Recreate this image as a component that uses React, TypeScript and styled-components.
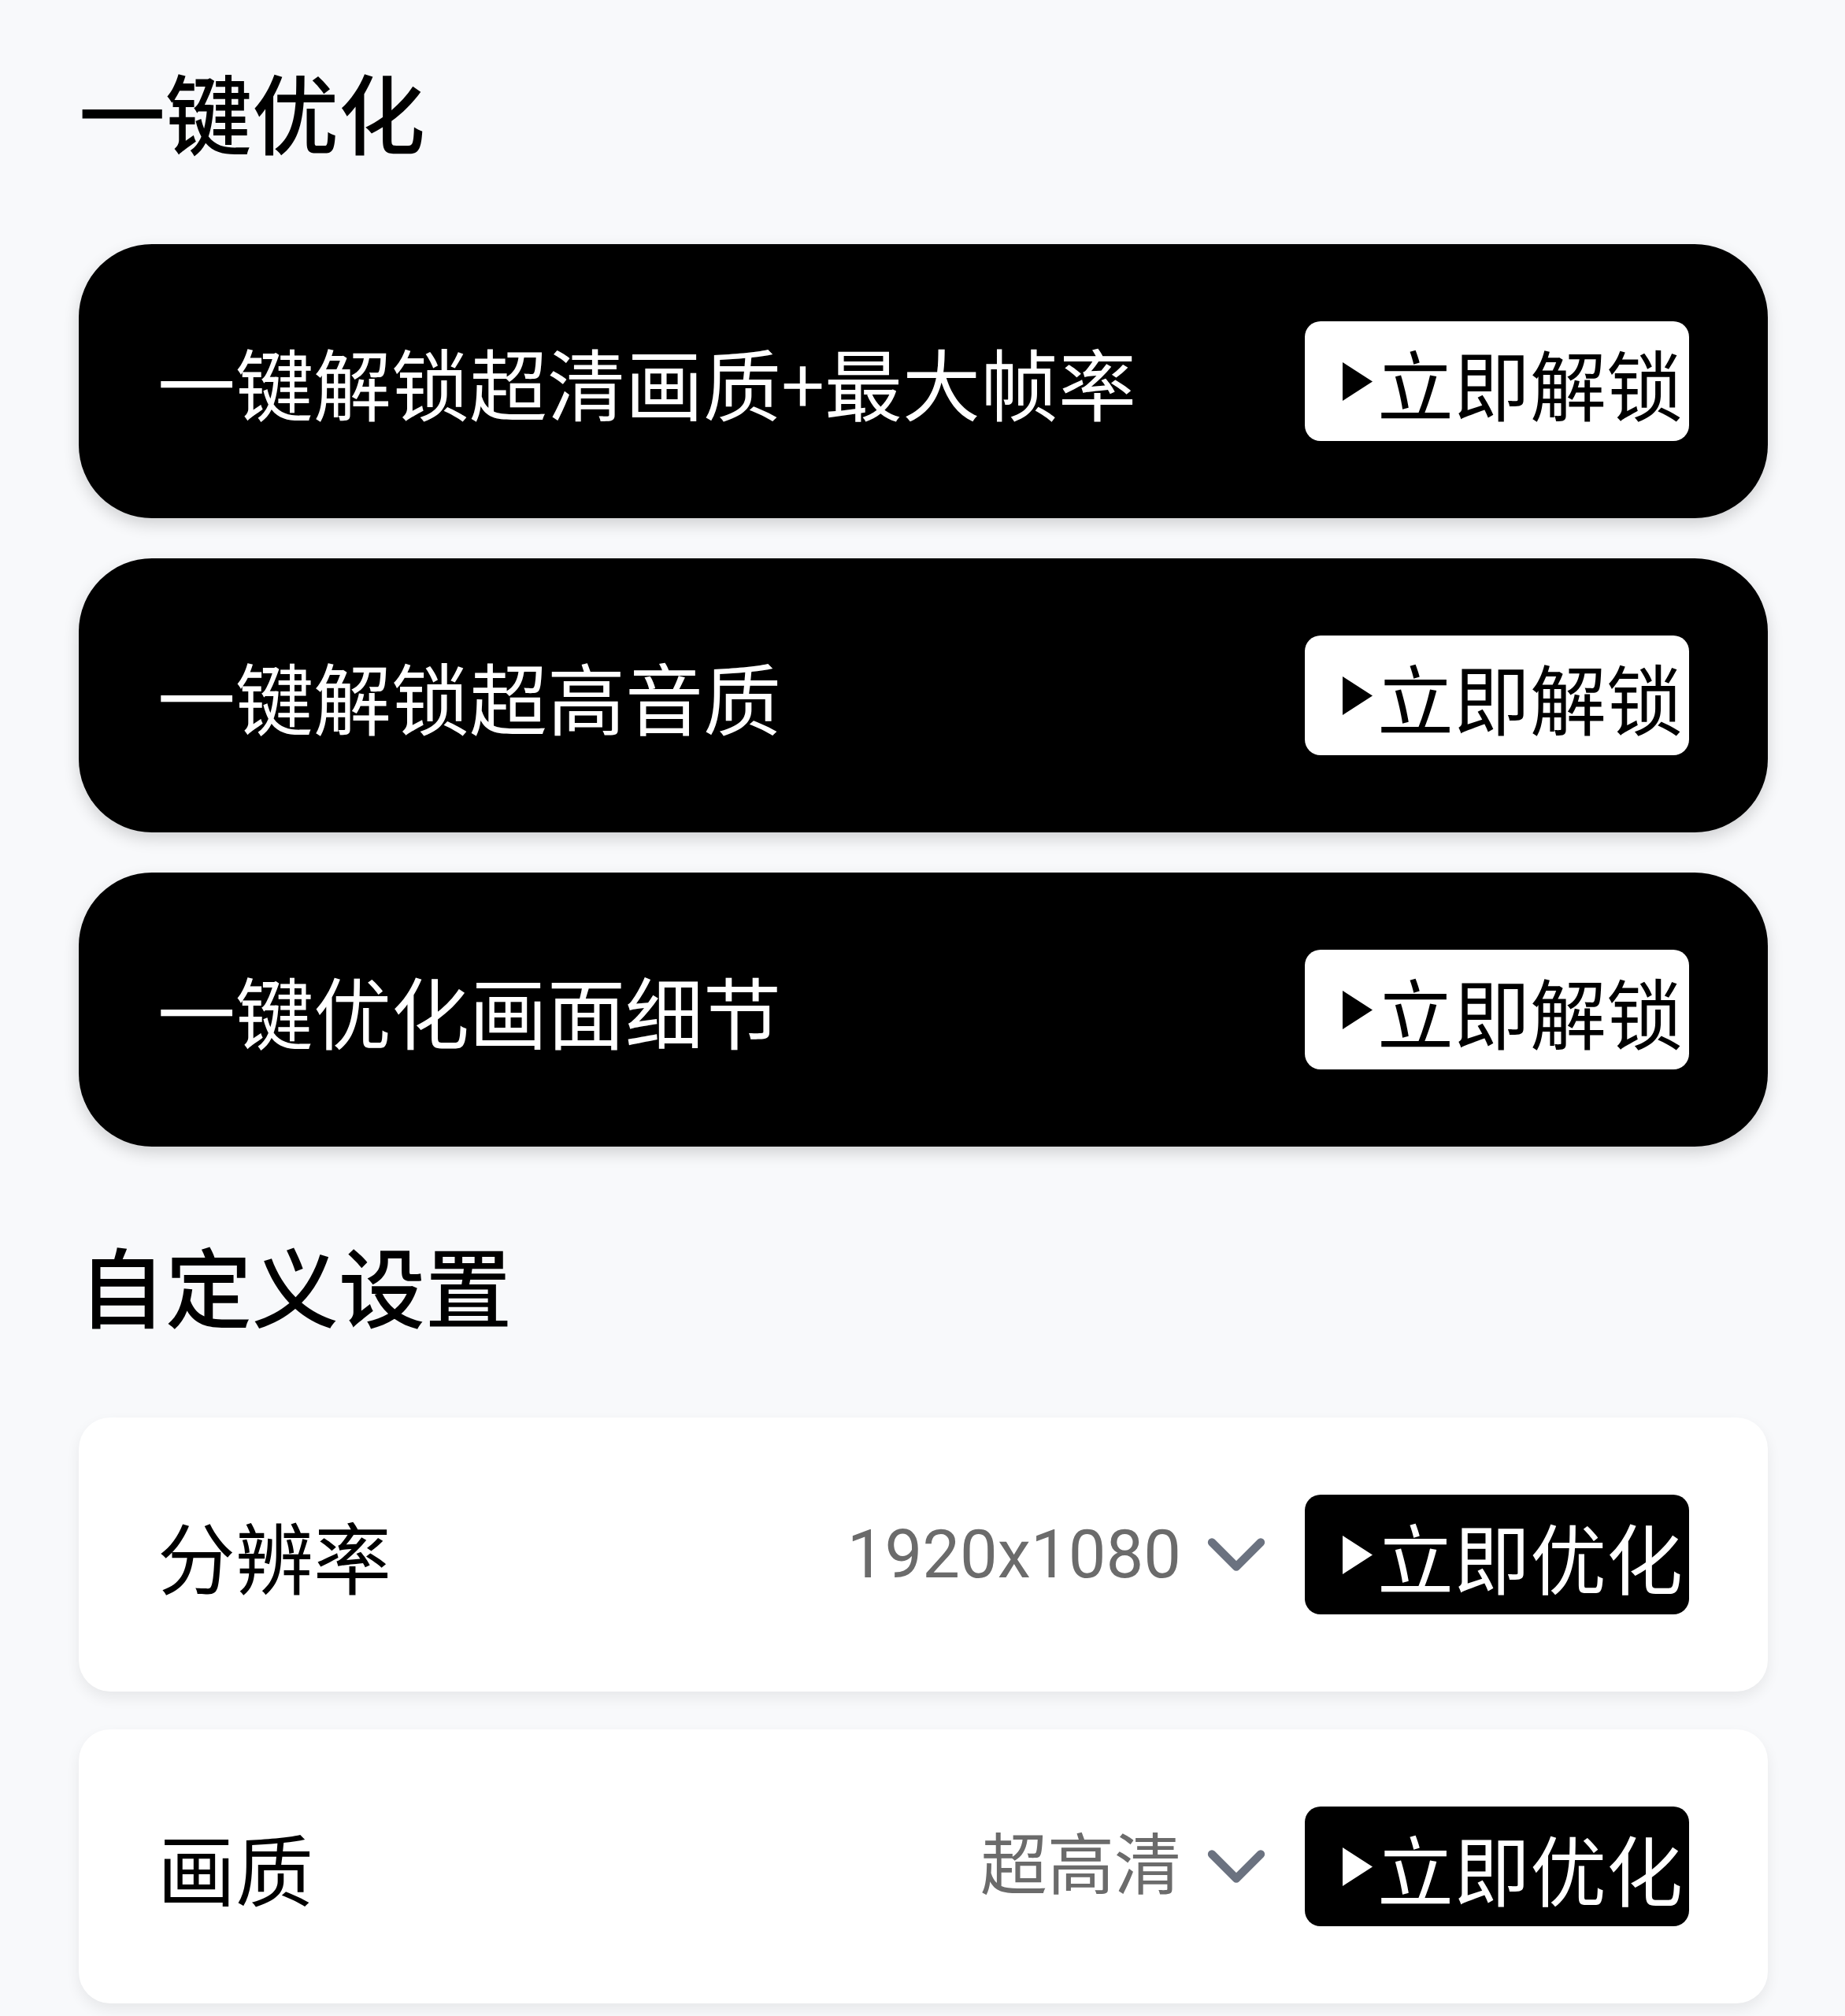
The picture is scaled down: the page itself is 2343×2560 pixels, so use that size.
import styled, { createGlobalStyle } from 'styled-components'
import { ChevronDown } from 'lucide-react'

const GlobalStyle = createGlobalStyle`
  html, body {
    margin: 0;
    padding: 0;
    background: #f8f9fb;
  }
  body {
    font-family: "Noto Sans CJK SC", "Noto Sans", sans-serif;
    color: #000;
  }
`

const Page = styled.main`
  width: 2145px;
  padding: 85px 98px 40px 100px;
`

const SectionTitle = styled.h2<{ $top?: number }>`
  margin: ${(p) => p.$top ?? 0}px 0 115px;
  font-size: 110px;
  line-height: 1;
  font-weight: 500;
  color: #000;
`

const CardList = styled.div<{ $gap: number }>`
  display: flex;
  flex-direction: column;
  gap: ${(p) => p.$gap}px;
`

const Card = styled.div<{ $dark?: boolean }>`
  display: flex;
  align-items: center;
  padding: 98px 100px;
  border-radius: ${(p) => (p.$dark ? '93px' : '40px')};
  background: ${(p) => (p.$dark ? '#000' : '#fff')};
  box-shadow: ${(p) =>
    p.$dark ? '0 8px 20px rgba(0, 0, 0, 0.16)' : '0 8px 18px rgba(0, 0, 0, 0.07)'};
`

const Label = styled.span<{ $dark?: boolean }>`
  flex: 1;
  font-size: 99px;
  line-height: 1;
  white-space: nowrap;
  color: ${(p) => (p.$dark ? '#fff' : '#000')};
`

const Value = styled.span`
  font-family: Roboto, "Noto Sans CJK SC", sans-serif;
  font-size: 85px;
  line-height: 1;
  color: #6b6b6b;
  white-space: nowrap;
`

const Chevron = styled(ChevronDown)`
  flex: none;
  margin: 0 25px 0 8px;
  color: #6b7280;
`

const ActionButton = styled.button<{ $dark?: boolean }>`
  all: unset;
  flex: none;
  box-sizing: border-box;
  width: 488px;
  height: 152px;
  padding-left: 48px;
  display: flex;
  align-items: center;
  border-radius: 20px;
  background: ${(p) => (p.$dark ? '#000' : '#fff')};
  color: ${(p) => (p.$dark ? '#fff' : '#000')};
  font-family: "Noto Sans CJK SC", sans-serif;
  font-size: 97px;
  line-height: 1;
  white-space: nowrap;
  cursor: pointer;
`

const Play = styled.svg`
  flex: none;
  width: 38px;
  height: 49px;
  margin-right: 6px;
  fill: currentColor;
`

const PlayIcon = () => (
  <Play viewBox="0 0 38 49" aria-hidden="true">
    <polygon points="0,0 38,24.5 0,49" />
  </Play>
)

const unlocks = ['一键解锁超清画质+最大帧率', '一键解锁超高音质', '一键优化画面细节']

const settings = [
  { label: '分辨率', value: '1920x1080' },
  { label: '画质', value: '超高清' },
]

const App = () => {
  return (
    <Page>
      <GlobalStyle />
      <SectionTitle>一键优化</SectionTitle>
      <CardList $gap={51}>
        {unlocks.map((text) => (
          <Card $dark key={text}>
            <Label $dark>{text}</Label>
            <ActionButton>
              <PlayIcon />
              立即解锁
            </ActionButton>
          </Card>
        ))}
      </CardList>

      <SectionTitle $top={119}>自定义设置</SectionTitle>
      <CardList $gap={48}>
        {settings.map((s) => (
          <Card key={s.label}>
            <Label>{s.label}</Label>
            <Value>{s.value}</Value>
            <Chevron size={124} strokeWidth={2} />
            <ActionButton $dark>
              <PlayIcon />
              立即优化
            </ActionButton>
          </Card>
        ))}
      </CardList>
    </Page>
  )
}

export default App
